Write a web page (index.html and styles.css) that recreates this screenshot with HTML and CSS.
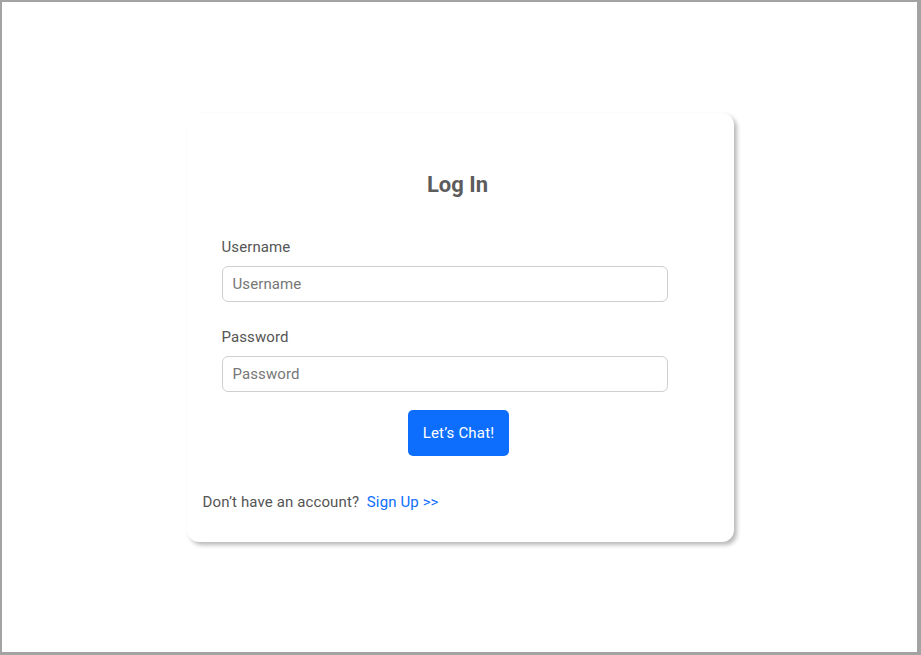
FILE: index.html
```html
<!DOCTYPE html>
<html>
<head>
<meta charset="utf-8">
<link rel="stylesheet" href="styles.css">
</head>
<body>
<div class="frame">
  <div class="card">
    <h1 class="title">Log In</h1>
    <form class="form">
      <div class="group">
        <label class="label">Username</label>
        <input class="input" type="text" placeholder="Username">
      </div>
      <div class="group">
        <label class="label">Password</label>
        <input class="input" type="password" placeholder="Password">
      </div>
      <div class="actions">
        <button class="btn" type="button">Let’s Chat!</button>
      </div>
    </form>
    <p class="footer">Don’t have an account?&nbsp; <a class="link" href="#">Sign Up &gt;&gt;</a></p>
  </div>
</div>
</body>
</html>
```
FILE: styles.css
```css
* { box-sizing: border-box; }
html, body { margin: 0; padding: 0; background: #fff; }
body { font-family: Roboto, "Liberation Sans", sans-serif; }
.frame {
  width: 921px;
  height: 655px;
  border-style: solid;
  border-color: #a3a3a3;
  border-width: 2px 4px 3px 2px;
  display: flex;
  align-items: center;
  justify-content: center;
  padding-left: 1px;
}
.card {
  width: 547px;
  height: 429px;
  background: #fff;
  border-radius: 12px;
  box-shadow: 3px 3px 4px rgba(0, 0, 0, 0.28);
  padding: 59px 20px 0 15px;
  display: flex;
  flex-direction: column;
}
.title {
  margin: 0;
  font-size: 22px;
  line-height: 26px;
  font-weight: 700;
  color: #5c5c5c;
  text-align: center;
}
.form {
  margin: 40px 0 0 20px;
  width: 446px;
}
.group { margin-bottom: 26px; }
.group + .group { margin-bottom: 18px; }
.label {
  display: block;
  font-size: 15px;
  line-height: 18px;
  color: #555;
  margin-bottom: 10px;
  letter-spacing: 0.1px;
}
.input {
  display: block;
  width: 446px;
  height: 36px;
  border: 1px solid #cfcfcf;
  border-radius: 6px;
  padding: 0 10px;
  font-family: inherit;
  font-size: 15px;
  letter-spacing: 0.1px;
  color: #555;
  outline: none;
}
.input::placeholder { color: #777; }
.actions {
  display: flex;
  justify-content: center;
  margin-left: -19px;
  width: 512px;
}
.btn {
  background: #0d6efd;
  color: #fff;
  border: none;
  border-radius: 5px;
  padding: 14px 15px;
  font-family: inherit;
  font-size: 15px;
  letter-spacing: 0.2px;
  line-height: 18px;
  cursor: pointer;
}
.footer {
  margin: 37px 0 0 1px;
  font-size: 15px;
  line-height: 18px;
  letter-spacing: 0.12px;
  color: #555;
}
.link { color: #0d6efd; text-decoration: none; }
```
